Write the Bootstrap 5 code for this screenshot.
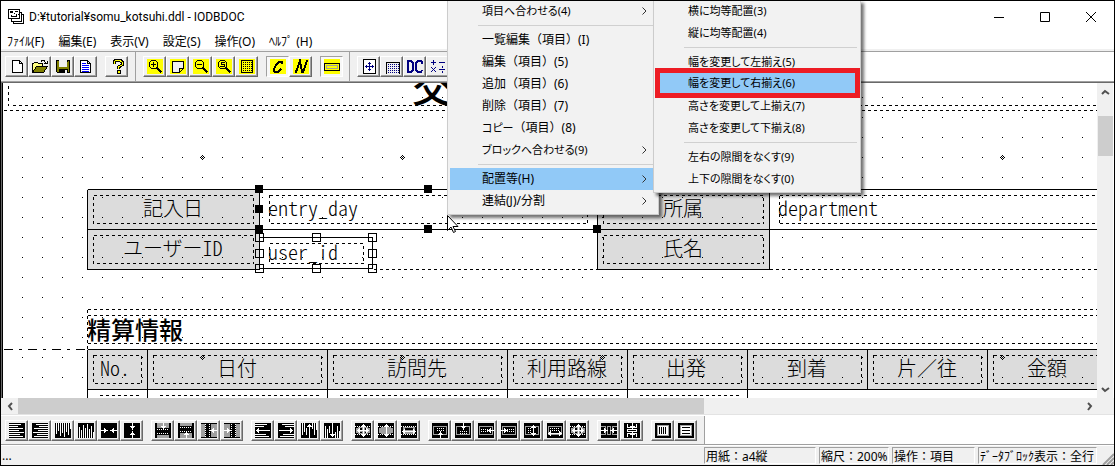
<!DOCTYPE html>
<html lang="ja">
<head>
<meta charset="utf-8">
<meta name="viewport" content="width=device-width, initial-scale=1">
<title>D:¥tutorial¥somu_kotsuhi.ddl - IODBDOC</title>
<link href="https://cdn.jsdelivr.net/npm/bootstrap@5.3.0/dist/css/bootstrap.min.css" rel="stylesheet">
<style>
body{font:12px/20px "Noto Sans","Noto Sans CJK JP",sans-serif;color:#000;background:#fff}
button{color:#000;font:inherit}
.app{height:100vh;border:1px solid #000}
.titlebar{height:31px;padding-left:7px}
.titlebar .caption{font-family:Roboto,"Noto Sans CJK JP",sans-serif}
.winbtn{width:46px;height:28px;border:0;background:none;padding:0;display:grid;place-items:center}
.menubar{height:17px;padding-left:6px;gap:14px}
.menubar button{border:0;background:none;padding:0;line-height:20px}
.palt{font-feature-settings:"palt"}
.rebar{height:34px;border-top:2px solid #f0f0f0;border-bottom:1px solid #696969;box-shadow:inset 0 1px #a0a0a0,inset 0 -1px #a0a0a0}
.band{background:#f0f0f0;padding:0 7px 0 4px;gap:8px;margin:1px 0}
.band+.band{border-left:1px solid #a0a0a0;padding:0 6px 0 7px}
.tool{width:23px;height:21px;padding:0;border:1px solid;border-color:#fff #696969 #696969 #fff;box-shadow:inset -1px -1px #a0a0a0;background:#f0f0f0;display:grid;place-items:center}
.tool.pressed{border-color:#a0a0a0 #fff #fff #a0a0a0;box-shadow:none;background:#f8f8f8}
svg{display:block}
.tool svg{width:16px;height:15px;shape-rendering:crispEdges}
.work{border-left:1px solid #696969;min-height:0}
.sheet{border-left:1px solid #000;min-width:0}
.sheet svg{width:100%;height:100%}
.jp{font-family:"Noto Sans CJK JP",sans-serif;font-size:20px;font-weight:300}
.half{font-feature-settings:"hwid"}
.vscroll{width:17px;background:#f0f0f0;border-right:1px solid #fff}
.hscroll{height:16px;background:#f0f0f0}
.thumb{background:#cdcdcd}
.vscroll .thumb{height:40px;margin:0 0 0 1px}
.hscroll .thumb{width:62.5%}
.arrow{border:0;padding:0;background:none;display:grid;place-items:center;flex:none}
.vscroll .arrow{height:17px}
.hscroll .arrow{width:17px}
.alignbar{height:31px;border-top:1px solid #e3e3e3;border-bottom:1px solid #a0a0a0}
.alignbar .band{margin:1px 0 0;border-right:1px solid #a0a0a0}
.status{height:20px;background:#f0f0f0;padding-left:1px;padding-right:17px;gap:3px;border-top:1px solid #fff}
.pane{height:17px;line-height:17px;border:1px solid;border-color:#a0a0a0 #fff #fff #a0a0a0;padding-left:1px;white-space:nowrap;overflow:hidden}
.w-a{width:112px}.w-b{width:70px}.w-c{width:83px}.w-d{width:119px}
.dropdown-menu.pop{--bs-dropdown-min-width:0;display:block;top:-1px;padding:0 2px 2px;background:#f2f2f2;border:1px solid #ccc;border-top:0;border-radius:0;box-shadow:3px 3px 3px rgba(0,0,0,.55);font-size:12px}
.pop .dropdown-item{height:22px;line-height:22px;padding:0 9px 0 32px;color:#000;display:flex;align-items:center;justify-content:space-between}
.pop .dropdown-item.hot{background:#91c9f7}
.pop .palt,.pop.palt{font-size:11px}
.pop .dropdown-divider{margin:3px 1px 3px 28px;border-top:1px solid #d0d0d0;opacity:1}
.menu-main{left:446px;width:212px}
.menu-sub{left:652px;width:208px}
.pop .hot.ring{height:20px;margin:0 3px 2px 4px;width:auto;min-width:calc(100% - 7px);padding-left:28px;outline:5px solid #ed1c24}
.cursor{left:445px;top:213px;z-index:1001}
.grip{right:0;bottom:0}
</style>
<script src="https://cdn.jsdelivr.net/npm/bootstrap@5.3.0/dist/js/bootstrap.bundle.min.js"></script>
</head>
<body>
<svg width="0" height="0" class="position-absolute" aria-hidden="true">
<defs>
<g id="bk"><path d="M0 0h16v15H0z"/></g>
<g id="yl"><path fill="#ff0" d="M0 0h16v15H0z"/></g>
<g id="aR"><path d="M0 7h5v1H0zM3 5h1v5H3zM4 6h1v3H4zM5 7h2v1H5z"/></g>
<g id="aL"><path d="M11 7h5v1h-5zM12 5h1v5h-1zM11 6h1v3h-1zM9 7h2v1H9z"/></g>
<g id="aD"><path d="M8 0h1v7H8zM6 3h5v1H6zM7 4h3v1H7z"/></g>
<g id="aU"><path d="M8 8h1v7H8zM6 11h5v1H6zM7 10h3v1H7z"/></g>
<g id="cross"><path d="M2 7h12v1H2zM8 1h1v13H8zM7 2h3v1H7zM6 3h5v1H6zM7 12h3v1H7zM6 11h5v1H6zM3 6h1v3H3zM4 5h1v5H4zM12 6h1v3h-1zM11 5h1v5h-1z"/></g>
<g id="hl"><path d="M0 1h12v1H0zM0 3h9v1H0zM0 5h14v1H0zM0 7h10v1H0zM0 9h15v1H0zM0 11h11v1H0zM0 13h14v1H0z"/></g>
<g id="vl"><path d="M1 0h1v11H1zM3 0h1v8H3zM5 0h1v13H5zM7 0h1v10H7zM9 0h1v14H9zM11 0h1v9h-1zM13 0h1v12h-1zM15 0h1v6h-1z"/></g>
<g id="dots"><path fill="none" stroke="#fff" stroke-dasharray="1 1" d="M0 3.500h16M0 11.500h16"/></g>
<symbol id="i1" viewBox="0 0 16 15"><use href="#bk"/><use href="#hl" fill="#fff"/></symbol>
<symbol id="i2" viewBox="0 0 16 15"><use href="#bk"/><use href="#hl" fill="#fff" transform="matrix(-1 0 0 1 16 0)"/></symbol>
<symbol id="i3" viewBox="0 0 16 15"><use href="#bk"/><use href="#vl" fill="#fff"/></symbol>
<symbol id="i4" viewBox="0 0 16 15"><use href="#bk"/><use href="#vl" fill="#fff" transform="matrix(1 0 0 -1 0 15)"/></symbol>
<symbol id="i5" viewBox="0 0 16 15"><use href="#bk"/><g fill="#fff"><use href="#aR"/><use href="#aL"/></g></symbol>
<symbol id="i6" viewBox="0 0 16 15"><use href="#bk"/><g fill="#fff"><use href="#aD"/><use href="#aU"/></g></symbol>
<symbol id="i7" viewBox="0 0 16 15"><use href="#bk"/><path fill="#a0a0a0" d="M2 0h12v5H2zM2 12h12v3H2z"/><path fill="none" stroke="#fff" stroke-dasharray="1 1" d="M2 6.500h12M2 10.500h12"/><use href="#aD" fill="#fff"/></symbol>
<symbol id="i8" viewBox="0 0 16 15"><use href="#i7" width="16" height="15" transform="matrix(1 0 0 -1 0 15)"/></symbol>
<symbol id="i9" viewBox="0 0 16 15"><use href="#bk"/><path fill="#a0a0a0" d="M0 1h4v13H0zM10 1h6v13h-6z"/><path fill="none" stroke="#fff" stroke-dasharray="1 1" d="M4.500 1v13M8.500 1v13"/><use href="#aL" fill="#fff"/></symbol>
<symbol id="i10" viewBox="0 0 16 15"><use href="#i9" width="16" height="15" transform="matrix(-1 0 0 1 16 0)"/></symbol>
<symbol id="i11" viewBox="0 0 16 15"><use href="#bk"/><path fill="#fff" d="M0 1h12v1H0zM0 3h9v1H0zM0 11h11v1H0zM0 13h14v1H0zM1 7h14v1H1zM3 5h1v5H3zM2 6h1v3H2z"/></symbol>
<symbol id="i12" viewBox="0 0 16 15"><use href="#i11" width="16" height="15" transform="matrix(-1 0 0 1 16 0)"/></symbol>
<symbol id="i13" viewBox="0 0 16 15"><use href="#bk"/><path fill="#fff" d="M1 0h1v12H1zM3 0h1v9H3zM13 0h1v12h-1zM15 0h1v7h-1zM11 0h1v6h-1zM8 1h1v14H8zM6 3h5v1H6zM7 2h3v1H7zM5 5h1v7H5z"/></symbol>
<symbol id="i14" viewBox="0 0 16 15"><use href="#i13" width="16" height="15" transform="matrix(1 0 0 -1 0 15)"/></symbol>
<symbol id="i15" viewBox="0 0 16 15"><use href="#bk"/><path fill="#a0a0a0" d="M3 4h10v1h2v5h-2v1H3v-1H1V5h2z"/><use href="#dots"/><path d="M5 5h2v2H5zM10 5h2v2h-2zM5 9h2v1H5zM10 9h2v1h-2z"/><use href="#cross" fill="#fff"/></symbol>
<symbol id="i16" viewBox="0 0 16 15"><use href="#bk"/><path fill="#a0a0a0" d="M3 4h10v1h2v5h-2v1H3v-1H1V5h2z"/><use href="#dots"/><path fill="#fff" d="M8 1h1v13H8zM7 2h3v1H7zM6 3h5v1H6zM7 12h3v1H7zM6 11h5v1H6z"/></symbol>
<symbol id="i17" viewBox="0 0 16 15"><use href="#bk"/><path fill="#a0a0a0" d="M2 4h12v7H2z"/><path d="M4 5h8v2H4z"/><use href="#dots"/><path fill="#fff" d="M1 8h14v1H1zM3 6h1v5H3zM2 7h1v3H2zM12 6h1v5h-1zM13 7h1v3h-1z"/></symbol>
<g id="fr"><path d="M0 0h16v15H0z"/><path fill="none" stroke="#a0a0a0" d="M1.500 3.500h13v8h-13z"/></g>
<symbol id="i18" viewBox="0 0 16 15"><use href="#fr"/><path fill="none" stroke="#fff" stroke-dasharray="1 1" d="M5 5.500h7M5 7.500h7"/><use href="#aU" fill="#fff"/></symbol>
<symbol id="i19" viewBox="0 0 16 15"><use href="#fr"/><path fill="none" stroke="#fff" stroke-dasharray="1 1" d="M5 8.500h7M5 10.500h7"/><use href="#aD" fill="#fff"/></symbol>
<symbol id="i20" viewBox="0 0 16 15"><use href="#fr"/><path fill="none" stroke="#fff" stroke-dasharray="1 1" d="M3 6.500h7M3 8.500h7"/><use href="#aL" fill="#fff"/></symbol>
<symbol id="i21" viewBox="0 0 16 15"><use href="#i20" width="16" height="15" transform="matrix(-1 0 0 1 16 0)"/></symbol>
<symbol id="i22" viewBox="0 0 16 15"><use href="#fr"/><path fill="none" stroke="#fff" stroke-dasharray="1 1" d="M4.500 5v6M6.500 5v6"/><path fill="#fff" d="M9 2h1v11H9zM8 3h3v1H8zM7 4h5v1H7zM8 11h3v1H8zM7 10h5v1H7z"/></symbol>
<symbol id="i23" viewBox="0 0 16 15"><use href="#fr"/><path fill="none" stroke="#fff" stroke-dasharray="1 1" d="M3 5.500h10M3 7.500h10"/><path fill="#fff" d="M1 10h14v1H1zM3 8h1v5H3zM2 9h1v3H2zM12 8h1v5h-1zM13 9h1v3h-1z"/></symbol>
<symbol id="i24" viewBox="0 0 16 15"><use href="#bk"/><path fill="none" stroke="#a0a0a0" d="M0 3.500h4.500v8H0M6.500 3.500h3v8h-3zM16 3.500h-4.500v8H16"/><g fill="#fff"><use href="#aR"/><use href="#aL"/></g></symbol>
<symbol id="i25" viewBox="0 0 16 15"><use href="#bk"/><path fill="none" stroke="#fff" d="M3.500 1v3.500h9V1M3.500 6.500h9v2h-9zM3.500 14v-3.500h9V14"/><g fill="#fff"><use href="#aD"/><use href="#aU"/></g></symbol>
<symbol id="i26" viewBox="0 0 16 15"><use href="#bk"/><path fill="#fff" stroke="#a0a0a0" d="M2.500 2.500h11v10h-11z"/><path fill="none" stroke="#000" d="M4.500 4v7M6.500 4v7M8.500 4v7M10.500 4v7"/></symbol>
<symbol id="i27" viewBox="0 0 16 15"><use href="#bk"/><path fill="#fff" stroke="#a0a0a0" d="M2.500 2.500h11v10h-11z"/><path fill="none" stroke="#000" d="M4 4.500h8M4 7.500h8M4 10.500h8"/></symbol>
<symbol id="new" viewBox="0 0 16 15"><path fill="#fff" stroke="#000" d="M3.500 1.500h7l3 3v9h-10zM10.500 1.500v3h3"/></symbol>
<symbol id="open" viewBox="0 0 16 15"><path fill="#ffff80" stroke="#000" d="M.5 13.500v-9h1l1-1h3l1 1h4v3"/><path fill="#808000" stroke="#000" d="M.5 13.500l4-6h11l-4 6z"/><path fill="none" stroke="#000" d="M9 2.500l1-1h2l2 3M12 4.500h3v-3"/></symbol>
<symbol id="save" viewBox="0 0 16 15"><path fill="#808000" stroke="#000" d="M1.500 1.500h13v12h-12l-1-1z"/><path fill="#f0f0f0" d="M4 1h8v7H4z"/><path d="M4 10h9v4H4zM12 2h1v1h-1z"/><path fill="#f0f0f0" d="M10 11h2v3h-2z"/></symbol>
<symbol id="doc" viewBox="0 0 16 15"><path fill="#fff" stroke="#000" d="M2.500 1.500h7l3 3v9h-10zM9.500 1.500v3h3"/><path stroke="#00f" d="M4 4.500h4M4 6.500h7M4 8.500h7M4 10.500h7M4 12.500h7"/></symbol>
<symbol id="help" viewBox="0 0 16 15"><path d="M5 5V3l2-2h4l2 2v3L9.500 8v2" fill="none" stroke="#000" stroke-width="3"/><path d="M5 5V3l2-1.500h4L13 3v3L9.500 8v2" fill="none" stroke="#ff0"/><path stroke="#000" fill="#ff0" d="M8 11.500h3v2.500H8z"/></symbol>
<g id="mag" fill="none" stroke="#000"><path d="M4.500 1.500h4l2 2v4l-2 2h-4l-2-2v-4z"/><path stroke-width="2" d="M9.500 8.500l5 5"/></g>
<symbol id="zin" viewBox="0 0 16 15"><use href="#yl"/><use href="#mag"/><path stroke="#000" d="M4 5.500h5M6.500 3v5"/></symbol>
<symbol id="zpage" viewBox="0 0 16 15"><use href="#yl"/><path fill="#f0f0f0" stroke="#000" d="M2.500 2.500h11v7l-4 4h-7zM13.500 9.500h-4v4"/></symbol>
<symbol id="zout" viewBox="0 0 16 15"><use href="#yl"/><use href="#mag"/><path stroke="#000" d="M4 5.500h5"/></symbol>
<symbol id="zs" viewBox="0 0 16 15"><use href="#yl"/><use href="#mag"/><path fill="none" stroke="#000" d="M9 3.500H5.500v2h3v2H4"/></symbol>
<symbol id="grid" viewBox="0 0 16 15"><use href="#yl"/><path fill="none" stroke="#000" d="M2.500 1.500h11v12h-11z"/><path stroke="#000" stroke-dasharray="1 1" d="M4 3.500h9M4 5.500h9M4 7.500h9M4 9.500h9M4 11.500h9"/></symbol>
<symbol id="ic" viewBox="0 0 16 15"><use href="#yl"/><path fill="none" stroke="#000" stroke-width="2" d="M12 5V3H9L6 6l-2 4v2l1 1h3l3-3"/></symbol>
<symbol id="in" viewBox="0 0 16 15"><use href="#yl"/><path fill="none" stroke="#000" stroke-width="2" d="M2 13h1L7 2l2 11h1L14 2h1"/></symbol>
<symbol id="bar" viewBox="0 0 16 15"><use href="#yl"/><path fill="none" stroke="#000" d="M.5 4.500h15v7H.5z"/><path fill="none" stroke="#a0a0a0" d="M2.500 6.500h11v3h-11z"/></symbol>
<symbol id="move" viewBox="0 0 16 15"><path fill="#fff" stroke="#000" d="M2.500.5h12v14h-12z"/><path fill="none" stroke="#000080" d="M4 7.500h9M8.500 3v9M7 4.500h3M7 10.500h3M5.500 6v3M11.500 6v3"/></symbol>
<symbol id="gridp" viewBox="0 0 16 15"><path fill="none" stroke="#000" d="M2.500 15V3.500H15V15"/><path stroke="#000080" stroke-dasharray="1 1" d="M4 5.500h11M4 7.500h11M4 9.500h11M4 11.500h11M4 13.500h11"/></symbol>
<symbol id="dc" viewBox="0 0 16 15"><path fill="none" stroke="#000080" stroke-width="2" d="M1 2v11M0 2h4l2 2v7l-2 2H0M15 5V3l-1-1h-3L9 4v7l2 2h3l1-2"/></symbol>
<symbol id="calc" viewBox="0 0 16 15"><path fill="none" stroke="#000080" d="M1 3.500h5M3.500 1v5M9 3.500h6M9 10.500h6M12 7v2M12 12v2"/><path fill="#000080" d="M1 8h1v1H1zM2 9h1v1H2zM3 10h1v1H3zM4 11h1v1H4zM5 12h1v1H5zM5 8h1v1H5zM4 9h1v1H4zM2 11h1v1H2zM1 12h1v1H1z"/></symbol>
<pattern id="dotgrid" x="22" y="97" width="20" height="20" patternUnits="userSpaceOnUse"><path d="M0 0h1v1H0z"/></pattern>
<path id="mark4" d="M2 0h1v1H2zM1 1h1v1H1zM3 1h1v1H3zM0 2h1v1H0zM4 2h1v1H4zM1 3h1v1H1zM3 3h1v1H3zM2 4h1v1H2z"/>
</defs></svg>

<div class="app position-relative overflow-hidden d-flex flex-column">
<header class="titlebar d-flex align-items-center flex-shrink-0">
<svg width="17" height="16" viewBox="0 0 17 16" shape-rendering="crispEdges" class="me-1" aria-hidden="true"><g fill="#fff" stroke="#000"><path d="M5.500 5.500h10v9h-10z"/><path d="M3.500 3.500h10v9h-10z"/><path d="M.5.500h11v9H.500z"/></g><path d="M2 2h3v2H2zM7 2h3v1H7zM3 6h1v1h4V5h1v3H3zM6 4h1v1H6zM10 5h1v1h-1z"/></svg>
<span class="caption">D:¥tutorial¥somu_kotsuhi.ddl - IODBDOC</span>
<div class="d-flex ms-auto">
<button class="winbtn" aria-label="最小化"><svg width="10" height="10"><path d="M0 5h10v1H0z"/></svg></button>
<button class="winbtn" aria-label="最大化"><svg width="10" height="10" fill="none" stroke="#000"><path d="M.5.500h9v9H.500z"/></svg></button>
<button class="winbtn" aria-label="閉じる"><svg width="10" height="10" stroke="#000"><path d="M0 0l10 10M10 0L0 10"/></svg></button>
</div></header>
<nav class="menubar d-flex flex-shrink-0"><button>ﾌｧｲﾙ(F)</button><button>編集(E)</button><button>表示(V)</button><button>設定(S)</button><button>操作(O)</button><button>ﾍﾙﾌﾟ (H)</button></nav>

<div class="rebar d-flex flex-shrink-0">
<div class="band d-flex align-items-center">
<div class="d-flex"><button class="tool" aria-label="新規"><svg><use href="#new"/></svg></button><button class="tool" aria-label="開く"><svg><use href="#open"/></svg></button><button class="tool" aria-label="保存"><svg><use href="#save"/></svg></button><button class="tool" aria-label="文書"><svg><use href="#doc"/></svg></button></div>
<div class="d-flex"><button class="tool" aria-label="ヘルプ"><svg><use href="#help"/></svg></button></div>
</div>
<div class="band d-flex align-items-center">
<div class="d-flex"><button class="tool" aria-label="拡大"><svg><use href="#zin"/></svg></button><button class="tool" aria-label="全体"><svg><use href="#zpage"/></svg></button><button class="tool" aria-label="縮小"><svg><use href="#zout"/></svg></button><button class="tool" aria-label="標準倍率"><svg><use href="#zs"/></svg></button><button class="tool" aria-label="グリッド"><svg><use href="#grid"/></svg></button></div>
<div class="d-flex"><button class="tool pressed" aria-label="C"><svg><use href="#ic"/></svg></button><button class="tool" aria-label="N"><svg><use href="#in"/></svg></button></div>
<div class="d-flex"><button class="tool pressed" aria-label="枠"><svg><use href="#bar"/></svg></button></div>
</div>
<div class="band d-flex align-items-center">
<div class="d-flex"><button class="tool" aria-label="移動"><svg><use href="#move"/></svg></button><button class="tool" aria-label="網掛け"><svg><use href="#gridp"/></svg></button><button class="tool" aria-label="DC"><svg><use href="#dc"/></svg></button><button class="tool" aria-label="計算"><svg><use href="#calc"/></svg></button></div>
</div>
</div>

<main class="work d-flex flex-grow-1">
<div class="sheet flex-grow-1 overflow-hidden">
<!-- form being designed; coordinates are in sheet units, the view is scrolled -->
<svg role="img" aria-label="帳票レイアウト"><g transform="translate(-3 -83)">
<g fill="#dcdcdc"><path d="M87 189h172v80H87zM597 189h172v80H597zM87 349h1200v40H87z"/></g>
<path fill="url(#dotgrid)" d="M3 83h2000v306H3z"/>
<g shape-rendering="crispEdges"><use href="#mark4" x="200" y="155"/><use href="#mark4" x="400" y="155"/><use href="#mark4" x="1000" y="155"/><use href="#mark4" x="200" y="355"/><use href="#mark4" x="400" y="355"/><use href="#mark4" x="600" y="355"/><use href="#mark4" x="1000" y="355"/></g>
<g transform="translate(.5 .5)" fill="none" stroke="#000" shape-rendering="crispEdges">
<g stroke-dasharray="3 3">
<path d="M8 85v20M12 105h2000M3 110h2000"/>
<path d="M93 195h160v28H93zM93 235h160v28H93zM269 195h318v28H269zM603 195h160v28H603zM603 235h160v28H603z"/>
<path d="M779 195v28M779 195h1000M779 223h1000M373 269h224M769 269h1000M269 243h94v20h-94z"/>
<path d="M87 309v40M87 309h2000M87 315h2000M87 343h2000"/>
<path d="M93 355h48v28H93zM153 355h168v28H153zM333 355h168v28H333zM513 355h108v28H513zM633 355h108v28H633zM753 355h108v28H753zM873 355h108v28H873zM993 355h168v28H993z"/>
<path d="M99 395h40M159 395h160M339 395h160M519 395h100M639 395h100"/>
</g>
<path stroke-dasharray="9 6 3 6" d="M3 349h84"/>
<path d="M87 189h2000M87 229h2000M87 269h172M597 269h172M87 189v80M259 189v80M597 189v80M769 189v80M259 237h113v31H259z"/>
<path d="M87 349h2000M87 389h2000M87 349v60M147 349v60M327 349v60M507 349v60M627 349v60M747 349v60M867 349v40M987 349v40"/>
<path fill="#000" d="M255 185h7v7h-7zM424 185h7v7h-7zM255 205h7v7h-7zM255 225h7v7h-7zM424 225h7v7h-7zM593 225h7v7h-7z"/>
<path d="M255 233h8v8h-8zM312 233h8v8h-8zM368 233h8v8h-8zM255 249h8v8h-8zM368 249h8v8h-8zM255 264h8v8h-8zM312 264h8v8h-8zM368 264h8v8h-8z"/>
</g>
<g class="jp">
<text x="143" y="216">記入日</text><text x="123" y="256" class="half">ユーザーID</text><text x="663" y="216">所属</text><text x="663" y="256">氏名</text>
<text x="217" y="376">日付</text><text x="387" y="376">訪問先</text><text x="527" y="376">利用路線</text><text x="666" y="376">出発</text><text x="787" y="376">到着</text><text x="897" y="376">片／往</text><text x="1027" y="376">金額</text>
<g class="half"><text x="268" y="216">entry_day</text><text x="268" y="260">user_id</text><text x="778" y="216">department</text><text x="100" y="376">No.</text></g>
</g>
<text x="412" y="102" font-family="Noto Sans CJK JP" font-size="40" font-weight="500">交</text>
<text x="87" y="339" font-family="Noto Sans CJK JP" font-size="24" font-weight="500">精算情報</text>
</g></svg>
</div>
<div class="vscroll d-flex flex-column flex-shrink-0"><button class="arrow" aria-label="上へ"><svg width="9" height="6" fill="none" stroke="#505050" stroke-width="2"><path d="M1 5l3-3 4 3"/></svg></button><div class="thumb mt-3"></div><button class="arrow mt-auto" aria-label="下へ"><svg width="9" height="6" fill="none" stroke="#505050" stroke-width="2"><path d="M1 1l3 3 4-3"/></svg></button></div>
</main>
<div class="hscroll d-flex flex-shrink-0 pe-3"><button class="arrow" aria-label="左へ"><svg width="6" height="9" fill="none" stroke="#505050" stroke-width="2"><path d="M5 1L2 4l3 4"/></svg></button><div class="thumb"></div><button class="arrow ms-auto" aria-label="右へ"><svg width="6" height="9" fill="none" stroke="#505050" stroke-width="2"><path d="M1 1l3 3-3 4"/></svg></button></div>

<div class="alignbar d-flex flex-shrink-0"><div class="band d-flex align-items-center" id="alignTools"></div></div>

<footer class="status d-flex align-items-center flex-shrink-0"><span class="me-auto">...</span><span class="pane w-a">用紙：a4縦</span><span class="pane w-b">縮尺：200%</span><span class="pane w-c">操作：項目</span><span class="pane w-d">ﾃﾞｰﾀﾌﾞﾛｯｸ表示：全行</span></footer>
<svg class="grip position-absolute" width="12" height="12" stroke="#a0a0a0" stroke-width="2"><path d="M1 12L12 1M5 12l7-7M9 12l3-3"/></svg>

<div class="dropdown-menu pop menu-main show">
<button class="dropdown-item palt">項目へ合わせる(4)<svg width="5" height="8" fill="none" stroke="#333"><path d="M.5.500L4 4 .5 7.500"/></svg></button>
<hr class="dropdown-divider">
<button class="dropdown-item">一覧編集（項目）(I)</button>
<button class="dropdown-item">編集（項目）(5)</button>
<button class="dropdown-item">追加（項目）(6)</button>
<button class="dropdown-item">削除（項目）(7)</button>
<button class="dropdown-item"><span><span class="palt">コピー</span>（項目）(8)</span></button>
<button class="dropdown-item palt">ブロックへ合わせる(9)<svg width="5" height="8" fill="none" stroke="#333"><path d="M.5.500L4 4 .5 7.500"/></svg></button>
<hr class="dropdown-divider">
<button class="dropdown-item hot">配置等(H)<svg width="5" height="8" fill="none" stroke="#333"><path d="M.5.500L4 4 .5 7.500"/></svg></button>
<button class="dropdown-item">連結(J)/分割<svg width="5" height="8" fill="none" stroke="#333"><path d="M.5.500L4 4 .5 7.500"/></svg></button>
</div>
<div class="dropdown-menu pop menu-sub show palt">
<button class="dropdown-item">横に均等配置(3)</button>
<button class="dropdown-item">縦に均等配置(4)</button>
<hr class="dropdown-divider">
<button class="dropdown-item">幅を変更して左揃え(5)</button>
<button class="dropdown-item hot ring position-relative">幅を変更して右揃え(6)</button>
<button class="dropdown-item">高さを変更して上揃え(7)</button>
<button class="dropdown-item">高さを変更して下揃え(8)</button>
<hr class="dropdown-divider">
<button class="dropdown-item">左右の隙間をなくす(9)</button>
<button class="dropdown-item">上下の隙間をなくす(0)</button>
</div>
<svg class="cursor position-absolute" width="13" height="20" fill="#fff" stroke="#000"><path d="M1.500 1.500v15l3.500-3.500 2.500 5.500 2-1-2.500-5h5z"/></svg>
</div>
<script>
// alignment toolbar: button groups, numbered in icon order
let n = 0;
document.getElementById('alignTools').innerHTML = [6, 4, 4, 3, 7, 2, 2].map(size =>
  '<div class="d-flex">' + Array.from({length: size}, () => {
    n++;
    const icon = n < 24 ? n : n === 24 ? 15 : n - 1;
    return `<button class="tool" aria-label="整列 ${n}"><svg><use href="#i${icon}"/></svg></button>`;
  }).join('') + '</div>').join('');
</script>
</body>
</html>
